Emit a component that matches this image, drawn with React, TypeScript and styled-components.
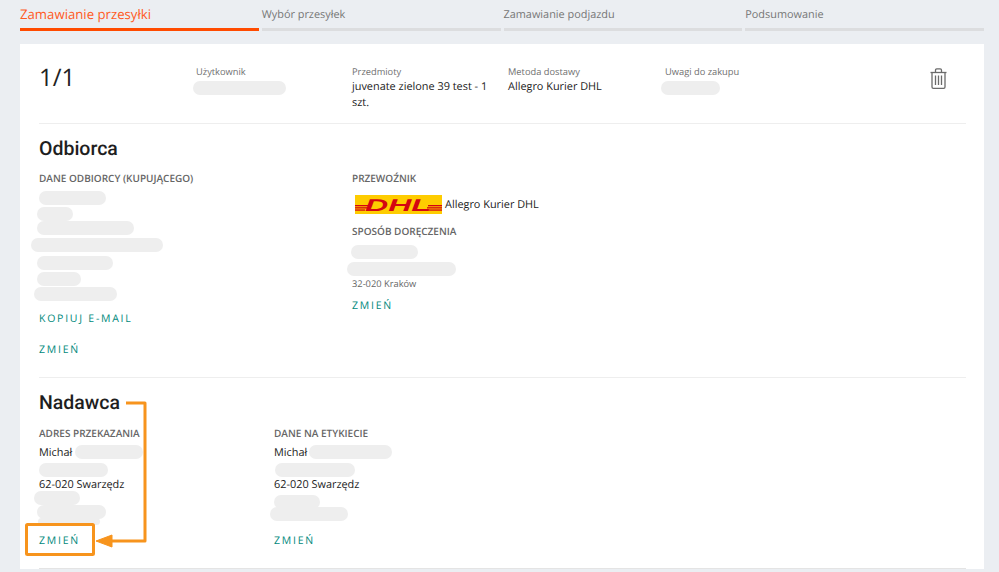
import styled, { createGlobalStyle } from "styled-components";

const GlobalStyle = createGlobalStyle`
  body {
    margin: 0;
    background-color: #ebeef2;
    font-family: "Open Sans", "Liberation Sans", sans-serif;
    text-rendering: geometricPrecision;
  }
`;

const steps = [
  "Zamawianie przesyłki",
  "Wybór przesyłek",
  "Zamawianie podjazdu",
  "Podsumowanie",
];

const App = () => {
  return (
    <Page>
      <GlobalStyle />
      <Steps>
        {steps.map((step, i) => (
          <Step key={step} $active={i === 0}>
            {step}
          </Step>
        ))}
      </Steps>
      <Card>
        <Summary>
          <Counter>1/1</Counter>
          <SummaryItem>
            <SmallLabel>Użytkownik</SmallLabel>
            <Blur $w={93} $x={-3} $top={2} />
          </SummaryItem>
          <SummaryItem>
            <SmallLabel>Przedmioty</SmallLabel>
            <Value>juvenate zielone 39 test - 1 szt.</Value>
          </SummaryItem>
          <SummaryItem>
            <SmallLabel>Metoda dostawy</SmallLabel>
            <Value>Allegro Kurier DHL</Value>
          </SummaryItem>
          <SummaryItem>
            <SmallLabel>Uwagi do zakupu</SmallLabel>
            <Blur $w={59} $x={-4} $top={2} />
          </SummaryItem>
          <TrashButton>
            <TrashIcon />
          </TrashButton>
        </Summary>

        <Section $bottom={21}>
          <Heading>Odbiorca</Heading>
          <Columns $first={313}>
            <Column>
              <FieldLabel>DANE ODBIORCY (KUPUJĄCEGO)</FieldLabel>
              <Blur $w={67} $top={6} />
              <Blur $w={36} $x={-2} $top={2} />
              <Blur $w={97} $x={-2} $top={0} />
              <Blur $w={132} $x={-8} $top={3} />
              <Blur $w={76} $x={-2} $top={4} />
              <Blur $w={44} $x={-2} $top={2} />
              <Blur $w={83} $x={-5} $top={1} />
              <ActionLink $top={10}>KOPIUJ E-MAIL</ActionLink>
              <ActionLink $top={17}>ZMIEŃ</ActionLink>
            </Column>
            <Column>
              <FieldLabel>PRZEWOŹNIK</FieldLabel>
              <Carrier>
                <DhlLogo />
                <Value>Allegro Kurier DHL</Value>
              </Carrier>
              <FieldLabel $top={10}>SPOSÓB DORĘCZENIA</FieldLabel>
              <Blur $w={67} $x={-1} $top={7} />
              <Blur $w={109} $x={-5} $top={3} />
              <Note>32-020 Kraków</Note>
              <ActionLink $top={7}>ZMIEŃ</ActionLink>
            </Column>
          </Columns>
        </Section>

        <Section $bottom={21}>
          <Heading>Nadawca</Heading>
          <Columns $first={235} $top={10}>
            <Column>
              <FieldLabel>ADRES PRZEKAZANIA</FieldLabel>
              <NameRow>
                Michał
                <Blur $w={68} $x={3} $top={0} />
              </NameRow>
              <Blur $w={69} $top={3} />
              <AddressLine>62-020 Swarzędz</AddressLine>
              <Blur $w={46} $x={-5} $top={0} />
              <Blur $w={69} $x={-2} $top={0} />
              <Blur $w={62} $x={-1} $top={-1} $h={7} />
              <ActionLink $top={8}>ZMIEŃ</ActionLink>
            </Column>
            <Column>
              <FieldLabel>DANE NA ETYKIECIE</FieldLabel>
              <NameRow>
                Michał
                <Blur $w={83} $x={2} $top={0} />
              </NameRow>
              <Blur $w={80} $x={1} $top={3} />
              <AddressLine>62-020 Swarzędz</AddressLine>
              <Blur $w={46} $top={4} />
              <Blur $w={78} $x={-4} $top={-2} />
              <ActionLink $top={12}>ZMIEŃ</ActionLink>
            </Column>
          </Columns>
        </Section>
      </Card>
      <Annotation />
    </Page>
  );
};

export default App;

const TrashIcon = () => (
  <svg width="17" height="21" viewBox="0 0 17 21" fill="none" stroke="#6b6b6b" strokeWidth="1.3">
    <path d="M0.5 4.5h16" />
    <path d="M5.5 4.5V2.2c0-.8.5-1.4 1.3-1.4h3.4c.8 0 1.3.6 1.3 1.4v2.3" />
    <path d="M2 4.5v14.4c0 .8.5 1.4 1.3 1.4h10.4c.8 0 1.3-.6 1.3-1.4V4.5" />
    <path d="M5.5 7.5v9.5M8.5 7.5v9.5M11.5 7.5v9.5" />
  </svg>
);

const DhlLogo = () => (
  <svg width="87" height="19" viewBox="0 0 87 19">
    <rect width="87" height="19" fill="#fecc00" />
    <g fill="#d40511">
      <rect x="0" y="10" width="14" height="1.3" />
      <rect x="0" y="12.2" width="12" height="1.3" />
      <rect x="0" y="14.4" width="10" height="1.3" />
      <rect x="73" y="10" width="14" height="1.3" />
      <rect x="72" y="12.2" width="15" height="1.3" />
      <rect x="71" y="14.4" width="16" height="1.3" />
      <text
        x="10"
        y="16"
        fontFamily="'Liberation Sans', sans-serif"
        fontWeight="700"
        fontStyle="italic"
        fontSize="17"
        textLength="66"
        lengthAdjust="spacingAndGlyphs"
      >
        DHL
      </text>
    </g>
  </svg>
);

const Annotation = () => (
  <Overlay width="999" height="572" viewBox="0 0 999 572" fill="none">
    <rect x="26.5" y="524.5" width="67" height="30" rx="1" stroke="#f7941d" strokeWidth="3" />
    <path
      d="M126 403H145V541H110"
      stroke="#f7941d"
      strokeWidth="3"
      strokeLinejoin="round"
    />
    <path d="M96 541L112 535V547Z" fill="#f7941d" stroke="#f7941d" strokeWidth="1" />
  </Overlay>
);

const Page = styled.div`
  position: relative;
  box-sizing: border-box;
  width: 999px;
  height: 572px;
  padding: 0 15px 0 20px;
  overflow: hidden;
`;

const Steps = styled.div`
  display: grid;
  grid-template-columns: repeat(4, 1fr);
  column-gap: 3px;
`;

const Step = styled.div<{ $active: boolean }>`
  height: 28px;
  line-height: ${(p) => (p.$active ? "28px" : "29px")};
  font-size: ${(p) => (p.$active ? "13.2px" : "10.9px")};
  color: ${(p) => (p.$active ? "#ff5a1f" : "#767676")};
  border-bottom: 3px solid ${(p) => (p.$active ? "#ff4b00" : "#dcdddf")};
`;

const Card = styled.div`
  margin-top: 13px;
  padding: 0 18px 0 19px;
  background-color: #ffffff;
`;

const Summary = styled.div`
  display: grid;
  grid-template-columns: 157px 156px 156px 157px 1fr 36px;
  height: 79px;
  border-bottom: 1px solid #eeeeee;
`;

const Counter = styled.div`
  padding-top: 19px;
  font-size: 24px;
  line-height: 30px;
  color: #222222;
`;

const SummaryItem = styled.div`
  padding-top: 21px;
  padding-right: 10px;
  &:nth-child(5) {
    grid-column: 5;
  }
`;

const SmallLabel = styled.div`
  font-size: 9.3px;
  line-height: 14px;
  color: #6f6f6f;
`;

const Value = styled.div`
  font-size: 10.9px;
  line-height: 16px;
  color: #222222;
`;

const TrashButton = styled.div`
  grid-column: 6;
  grid-row: 1;
  padding-top: 24px;
`;

const Section = styled.section<{ $bottom: number }>`
  padding: 12px 0 ${(p) => p.$bottom}px;
  border-bottom: 1px solid #e4e4e4;

  &:first-of-type {
    border-bottom-color: #eeeeee;
  }
`;

const Heading = styled.h2`
  margin: 0;
  font-family: Roboto, "Liberation Sans", sans-serif;
  font-size: 19.5px;
  font-weight: 500;
  line-height: 26px;
  color: #1e1e1e;
`;

const Columns = styled.div<{ $first: number; $top?: number }>`
  display: grid;
  grid-template-columns: ${(p) => p.$first}px 1fr;
  margin-top: ${(p) => p.$top ?? 9}px;
`;

const Column = styled.div`
  display: flex;
  flex-direction: column;
  align-items: flex-start;
`;

const FieldLabel = styled.div<{ $top?: number }>`
  margin-top: ${(p) => p.$top ?? 0}px;
  font-size: 10px;
  font-weight: 600;
  line-height: 14px;
  color: #666666;
`;

const Blur = styled.div<{ $w: number; $x?: number; $top: number; $h?: number }>`
  flex: none;
  width: ${(p) => p.$w}px;
  height: ${(p) => p.$h ?? 14}px;
  margin-top: ${(p) => p.$top}px;
  margin-left: ${(p) => p.$x ?? 0}px;
  border-radius: 7px;
  background-color: #eeeeee;
`;

const ActionLink = styled.a<{ $top: number }>`
  height: 14px;
  margin-top: ${(p) => p.$top}px;
  font-size: 10.5px;
  line-height: 16px;
  letter-spacing: 1.75px;
  color: #00897b;
`;

const Carrier = styled.div`
  display: flex;
  align-items: center;
  gap: 3px;
  height: 19px;
  margin-top: 10px;
  margin-left: 3px;
`;

const Note = styled.div`
  margin-top: 1px;
  font-size: 9.3px;
  line-height: 14px;
  color: #666666;
`;

const NameRow = styled.div`
  display: flex;
  align-items: center;
  height: 16px;
  margin-top: 4px;
  font-size: 10.9px;
  color: #222222;
`;

const AddressLine = styled.div`
  height: 14px;
  font-size: 10.9px;
  line-height: 16px;
  color: #222222;
`;

const Overlay = styled.svg`
  position: absolute;
  top: 0;
  left: 0;
  pointer-events: none;
`;
